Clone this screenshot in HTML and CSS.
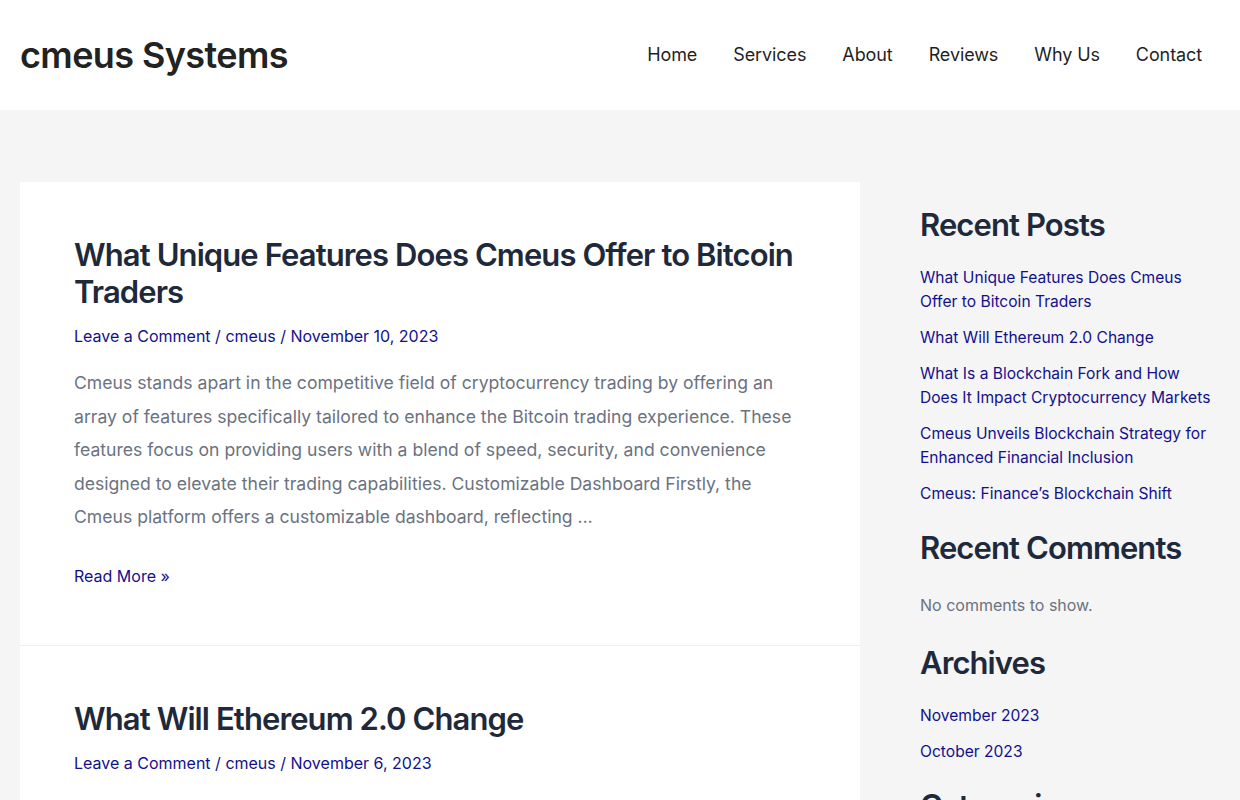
FILE: index.html
```html
<!DOCTYPE html>
<html lang="en">
<head>
  <meta charset="UTF-8">
  <meta name="viewport" content="width=device-width, initial-scale=1.0">
  <title>cmeus Systems</title>
  <link rel="stylesheet" href="styles.css">
</head>
<body>
  <header class="site-header">
    <div class="logo">cmeus Systems</div>
    <nav class="main-nav">
      <a href="#">Home</a>
      <a href="#">Services</a>
      <a href="#">About</a>
      <a href="#">Reviews</a>
      <a href="#">Why Us</a>
      <a href="#">Contact</a>
    </nav>
  </header>

  <div class="site-content">
    <main class="posts">
      <article class="post">
        <h2 class="post-title">What Unique Features Does Cmeus Offer to Bitcoin Traders</h2>
        <div class="post-meta"><a href="#">Leave a Comment</a> / <a href="#">cmeus</a> / <a href="#">November 10, 2023</a></div>
        <p class="excerpt">Cmeus stands apart in the competitive field of cryptocurrency trading by offering an array of features specifically tailored to enhance the Bitcoin trading experience. These features focus on providing users with a blend of speed, security, and convenience designed to elevate their trading capabilities. Customizable Dashboard Firstly, the Cmeus platform offers a customizable dashboard, reflecting …</p>
        <a class="read-more" href="#">Read More »</a>
      </article>
      <article class="post">
        <h2 class="post-title">What Will Ethereum 2.0 Change</h2>
        <div class="post-meta"><a href="#">Leave a Comment</a> / <a href="#">cmeus</a> / <a href="#">November 6, 2023</a></div>
        <p class="excerpt">Ethereum 2.0 is a major upgrade to the Ethereum network that changes the way transactions are validated and blocks are produced.</p>
      </article>
    </main>

    <aside class="sidebar">
      <section class="widget">
        <h2 class="widget-title">Recent Posts</h2>
        <ul>
          <li><a href="#">What Unique Features Does Cmeus Offer to Bitcoin Traders</a></li>
          <li><a href="#">What Will Ethereum 2.0 Change</a></li>
          <li><a href="#">What Is a Blockchain Fork and How Does It Impact Cryptocurrency Markets</a></li>
          <li><a href="#">Cmeus Unveils Blockchain Strategy for Enhanced Financial Inclusion</a></li>
          <li><a href="#">Cmeus: Finance’s Blockchain Shift</a></li>
        </ul>
      </section>
      <section class="widget">
        <h2 class="widget-title">Recent Comments</h2>
        <p class="no-comments">No comments to show.</p>
      </section>
      <section class="widget">
        <h2 class="widget-title">Archives</h2>
        <ul>
          <li><a href="#">November 2023</a></li>
          <li><a href="#">October 2023</a></li>
        </ul>
      </section>
      <section class="widget">
        <h2 class="widget-title">Categories</h2>
        <ul>
          <li><a href="#">Blockchain</a></li>
        </ul>
      </section>
    </aside>
  </div>
</body>
</html>
```

FILE: styles.css
```css
body {
  margin: 0;
  padding: 0;
  font-family: Inter, "Noto Sans", sans-serif;
  font-size: 16px;
  color: #6b7280;
  background-color: #f5f5f5;
}
a {
  color: #13108c;
  text-decoration: none;
}
.site-header {
  display: flex;
  align-items: center;
  justify-content: space-between;
  height: 110px;
  padding: 0 20px;
  background: white;
}
.logo {
  font-size: 36px;
  font-weight: 600;
  color: #222;
  letter-spacing: -0.6px;
}
.main-nav {
  display: flex;
}
.main-nav a {
  padding: 0 18px;
  font-size: 18px;
  color: #1f1f1f;
  line-height: 110px;
  letter-spacing: -0.1px;
}
.site-content {
  display: flex;
  align-items: flex-start;
  padding: 72px 20px 0;
  gap: 60px;
}
.posts {
  width: 840px;
  flex-shrink: 0;
}
.post {
  background: white;
  padding: 54px 54px 57px;
  border-bottom: 1px solid #eeeeee;
}
.post-title {
  margin: 0 0 14px;
  font-size: 31px;
  line-height: 37px;
  font-weight: 600;
  letter-spacing: -0.9px;
  color: #1e293b;
}
.post-meta {
  font-size: 16px;
  color: #13108c;
  line-height: 24px;
}
.excerpt {
  margin: 18px 0 30px;
  font-size: 17.6px;
  line-height: 33.5px;
  color: #6b7280;
}
.read-more {
  font-size: 16px;
  line-height: 24px;
}
.sidebar {
  flex: 1;
  padding-top: 24px;
}
.widget {
  margin-bottom: 23px;
}
.widget-title {
  margin: 0 0 22px;
  font-size: 31px;
  line-height: 38px;
  font-weight: 600;
  letter-spacing: -0.9px;
  color: #1e293b;
}
.widget ul {
  list-style: none;
  margin: 0;
  padding: 0;
}
.widget li {
  margin-bottom: 12px;
  font-size: 15.6px;
  line-height: 24px;
}
.no-comments {
  margin: 26px 0 27px;
  line-height: 24px;
}
```
